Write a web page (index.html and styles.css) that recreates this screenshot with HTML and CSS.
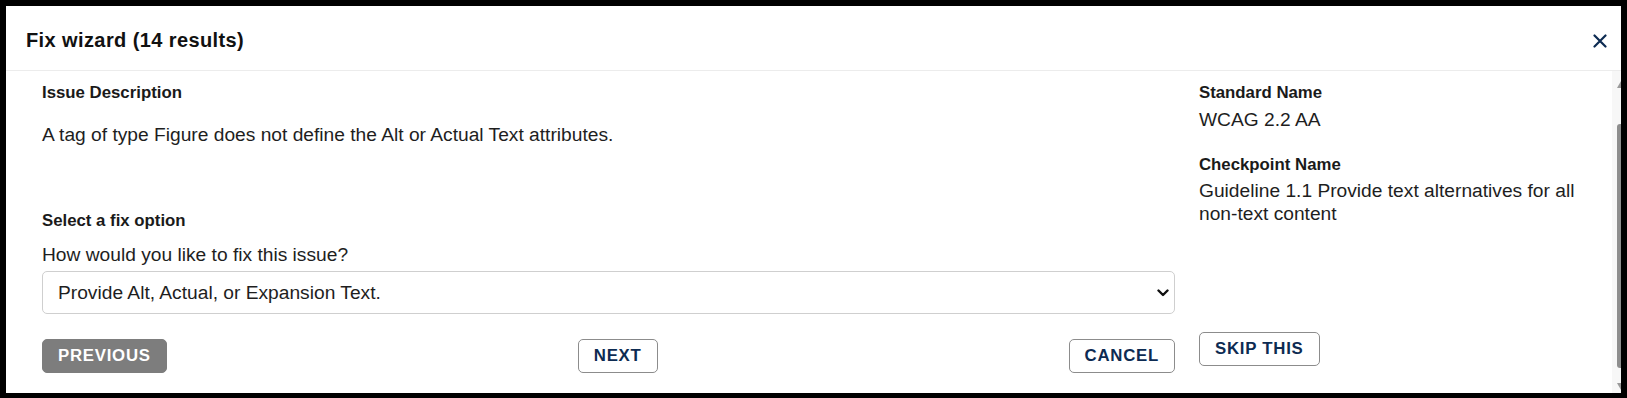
FILE: index.html
```html
<!DOCTYPE html>
<html lang="en">
<head>
  <meta charset="UTF-8" />
  <meta name="viewport" content="width=device-width, initial-scale=1.0" />
  <title>Fix wizard</title>
  <link rel="stylesheet" href="styles.css">
</head>
<body>
<div class="dialog" role="dialog" aria-labelledby="wizard-title">
  <header class="dialog-header">
    <h2 class="dialog-title" id="wizard-title">Fix wizard (14 results)</h2>
    <button class="close-button" aria-label="Close">
      <svg width="14" height="14" viewBox="0 0 14 14" fill="none" stroke="currentColor" stroke-width="2.2" stroke-linecap="round">
        <path d="M1.5 1.5l11 11M12.5 1.5l-11 11" />
      </svg>
    </button>
  </header>

  <div class="dialog-body">
    <div class="wizard-grid">
      <div class="main-col">
        <div class="field-label">Issue Description</div>
        <p class="issue-text">A tag of type Figure does not define the Alt or Actual Text attributes.</p>

        <div class="field-label fix-label">Select a fix option</div>
        <label class="question" for="fix-option">How would you like to fix this issue?</label>
        <div class="select-wrap">
          <select id="fix-option" class="fix-select">
            <option>Provide Alt, Actual, or Expansion Text.</option>
          </select>
          <svg class="select-chevron" width="12" height="8" viewBox="0 0 12 8" fill="none" stroke="currentColor" stroke-width="2.4" stroke-linecap="round" stroke-linejoin="round">
            <path d="M1.5 1.5l4.5 4.5 4.5-4.5" />
          </svg>
        </div>

        <div class="nav-buttons">
          <button class="btn btn-filled">Previous</button>
          <button class="btn btn-outline">Next</button>
          <button class="btn btn-outline">Cancel</button>
        </div>
      </div>

      <aside class="side-col">
        <div class="field-label">Standard Name</div>
        <div class="side-value">WCAG 2.2 AA</div>
        <div class="field-label checkpoint-label">Checkpoint Name</div>
        <div class="side-value checkpoint-value">Guideline 1.1 Provide text alternatives for all non-text content</div>
        <button class="btn btn-outline skip-button">Skip this</button>
      </aside>
    </div>

    <!-- scrollbar of the body, cut off by the overlay edge -->
    <div class="scrollbar" aria-hidden="true">
      <span class="scroll-up"></span>
      <span class="scroll-thumb"></span>
      <span class="scroll-down"></span>
    </div>
  </div>
</div>
</body>
</html>
```

FILE: styles.css
```css
body {
  margin: 0;
  padding: 6px 6px 5px 6px;
  background: #000;
  font-family: "Liberation Sans", Arial, sans-serif;
  color: #1e1e1e;
}
.dialog {
  background: #fff;
  overflow: hidden;
}
.dialog-header {
  display: flex;
  align-items: center;
  justify-content: space-between;
  padding: 22px 14px 18px 20px;
  border-bottom: 1px solid #ececec;
}
.dialog-title {
  margin: 0;
  font-size: 20px;
  line-height: 24px;
  font-weight: bold;
  letter-spacing: 0.4px;
  color: #111;
}
.close-button {
  display: flex;
  padding: 0;
  margin-top: 2px;
  border: none;
  background: none;
  color: #0d2b52;
  cursor: pointer;
}
.dialog-body {
  position: relative;
  padding: 10px 36px 20px 36px;
}
.wizard-grid {
  display: grid;
  grid-template-columns: 1133px 400px;
  column-gap: 24px;
}
.field-label {
  font-size: 16.8px;
  line-height: 24px;
  font-weight: bold;
  color: #1a1a1a;
}
.issue-text {
  margin: 16px 0 0 0;
  font-size: 19.2px;
  line-height: 28px;
}
.fix-label {
  margin-top: 60px;
}
.question {
  display: block;
  margin-top: 8px;
  font-size: 19.2px;
  line-height: 28px;
}
.select-wrap {
  position: relative;
  margin-top: 2px;
}
.fix-select {
  display: block;
  width: 100%;
  height: 43px;
  padding: 0 40px 0 15px;
  appearance: none;
  -webkit-appearance: none;
  border: 1px solid #cfcfcf;
  border-radius: 5px;
  background: #fff;
  font-family: inherit;
  font-size: 19.2px;
  color: #1e1e1e;
}
.select-chevron {
  position: absolute;
  right: 6px;
  top: 18px;
  color: #111;
  pointer-events: none;
}
.nav-buttons {
  display: flex;
  justify-content: space-between;
  margin-top: 25px;
}
.btn {
  height: 34px;
  padding: 0 15px;
  border-radius: 5px;
  font-family: inherit;
  font-size: 16.8px;
  font-weight: bold;
  letter-spacing: 0.75px;
  text-transform: uppercase;
  cursor: pointer;
}
.btn-filled {
  border: 1px solid #7d7d7d;
  background: #7d7d7d;
  color: #fff;
}
.btn-outline {
  border: 1px solid #8c8c8c;
  background: #fff;
  color: #0d2b52;
}
.side-col {
  display: flex;
  flex-direction: column;
  align-items: flex-start;
}
.side-value {
  margin-top: 1px;
  font-size: 19.2px;
  line-height: 28px;
}
.checkpoint-label {
  margin-top: 19px;
}
.checkpoint-value {
  margin-top: 2px;
  line-height: 23px;
}
.skip-button {
  margin-top: auto;
  margin-bottom: 7px;
}
.scrollbar {
  position: absolute;
  top: 0;
  right: 0;
  bottom: 0;
  width: 9px;
  background: #f7f7f7;
}
.scroll-thumb {
  position: absolute;
  left: 5px;
  right: 0;
  top: 53px;
  bottom: 25px;
  background: #8e8e8e;
  border-radius: 3px 0 0 3px;
}
.scroll-up,
.scroll-down {
  position: absolute;
  left: 5px;
  width: 0;
  height: 0;
  border-left: 4px solid transparent;
}
.scroll-up {
  top: 10px;
  border-bottom: 7px solid #9a9a9a;
}
.scroll-down {
  bottom: 3px;
  border-top: 7px solid #9a9a9a;
}
```
